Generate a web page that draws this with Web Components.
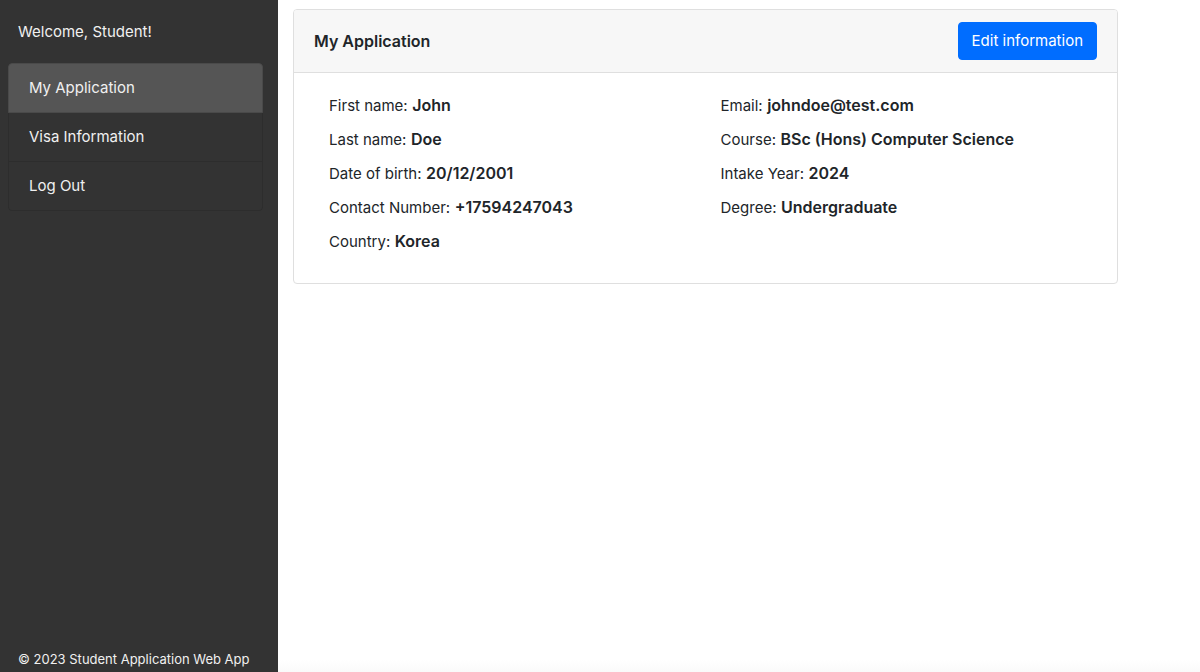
<!DOCTYPE html>
<html lang="en">
<head>
<meta charset="utf-8">
<meta name="viewport" content="width=device-width, initial-scale=1">
<title>Student Application Web App</title>
<style>
  body {
    margin: 0;
    font: 400 16px/24px Inter, "Liberation Sans", sans-serif;
    color: #212529;
    background: #fff;
  }
</style>
</head>
<body>
<app-shell>
  <side-bar slot="side" heading="Welcome, Student!">
    <nav-item href="#application" current>My Application</nav-item>
    <nav-item href="#visa">Visa Information</nav-item>
    <nav-item href="#logout">Log Out</nav-item>
    <span slot="footer">© 2023 Student Application Web App</span>
  </side-bar>
  <info-card heading="My Application" action="Edit information">
    <info-field label="First name:">John</info-field>
    <info-field label="Last name:">Doe</info-field>
    <info-field label="Date of birth:">20/12/2001</info-field>
    <info-field label="Contact Number:">+17594247043</info-field>
    <info-field label="Country:">Korea</info-field>
    <info-field slot="second" label="Email:">johndoe@test.com</info-field>
    <info-field slot="second" label="Course:">BSc (Hons) Computer Science</info-field>
    <info-field slot="second" label="Intake Year:">2024</info-field>
    <info-field slot="second" label="Degree:">Undergraduate</info-field>
  </info-card>
</app-shell>

<script>
  class BaseElement extends HTMLElement {
    constructor() {
      super();
      this.attachShadow({ mode: "open" }).innerHTML = this.constructor.markup;
    }
    fill(selector, attribute) {
      this.shadowRoot.querySelector(selector).textContent = this.getAttribute(attribute) || "";
    }
  }

  customElements.define("app-shell", class extends BaseElement {
    static markup = `
      <style>
        :host { display: grid; grid-template-columns: 278px minmax(0, 1fr); min-height: 100vh; }
        main {
          padding: 9px 82px 20px 15px;
          background: linear-gradient(to top, #fafafa, #fff 12px);
        }
      </style>
      <slot name="side"></slot>
      <main><slot></slot></main>`;
  });

  customElements.define("side-bar", class extends BaseElement {
    static markup = `
      <style>
        :host {
          display: flex; flex-direction: column; box-sizing: border-box;
          padding: 20px 15px 1px 8px; background: #333; color: #f0f0f0; font-size: 15px;
        }
        p { margin: 0 10px 19px; }
        nav { border-radius: 4px; overflow: hidden; }
        footer { margin-top: auto; padding: 0 10px; font-size: 13px; white-space: nowrap; }
      </style>
      <p></p>
      <nav aria-label="Main"><slot></slot></nav>
      <footer><slot name="footer"></slot></footer>`;
    connectedCallback() { this.fill("p", "heading"); }
  });

  customElements.define("nav-item", class extends BaseElement {
    static markup = `
      <style>
        :host { display: block; }
        a {
          display: block; padding: 12px 20px; color: inherit; text-decoration: none;
          border: 1px solid #2d2d2d; border-top: 0;
        }
        :host([current]) a { background: #555; border: 1px solid #4a4a4a; border-radius: 4px 4px 0 0; }
        :host(:last-of-type) a { border-radius: 0 0 4px 4px; }
      </style>
      <a><slot></slot></a>`;
    connectedCallback() {
      const link = this.shadowRoot.querySelector("a");
      link.href = this.getAttribute("href");
      if (this.hasAttribute("current")) link.setAttribute("aria-current", "page");
    }
  });

  customElements.define("info-card", class extends BaseElement {
    static markup = `
      <style>
        :host { display: block; border: 1px solid #dfdfdf; border-radius: 4px; background: #fff; overflow: hidden; }
        header {
          display: flex; align-items: center; justify-content: space-between;
          padding: 12px 20px; background: #f7f7f7; border-bottom: 1px solid #dfdfdf;
        }
        h1 { margin: 0; font-size: inherit; font-weight: 600; }
        button {
          padding: 6px 13px; border: 1px solid #006dff; border-radius: 4px;
          background: #006dff; color: #fff; font: inherit; font-size: 15px; cursor: pointer;
        }
        section { display: grid; grid-template-columns: 1fr 1fr; padding: 20px; }
        section > div { padding: 0 15px; }
      </style>
      <header><h1></h1><button type="button"></button></header>
      <section>
        <div><slot></slot></div>
        <div><slot name="second"></slot></div>
      </section>`;
    connectedCallback() {
      this.fill("h1", "heading");
      this.fill("button", "action");
    }
  });

  customElements.define("info-field", class extends BaseElement {
    static markup = `
      <style>
        :host { display: block; margin-bottom: 10px; }
        span { font-size: 15px; line-height: 20px; }
        strong { font-weight: 600; }
      </style>
      <span></span> <strong><slot></slot></strong>`;
    connectedCallback() { this.fill("span", "label"); }
  });
</script>
</body>
</html>
